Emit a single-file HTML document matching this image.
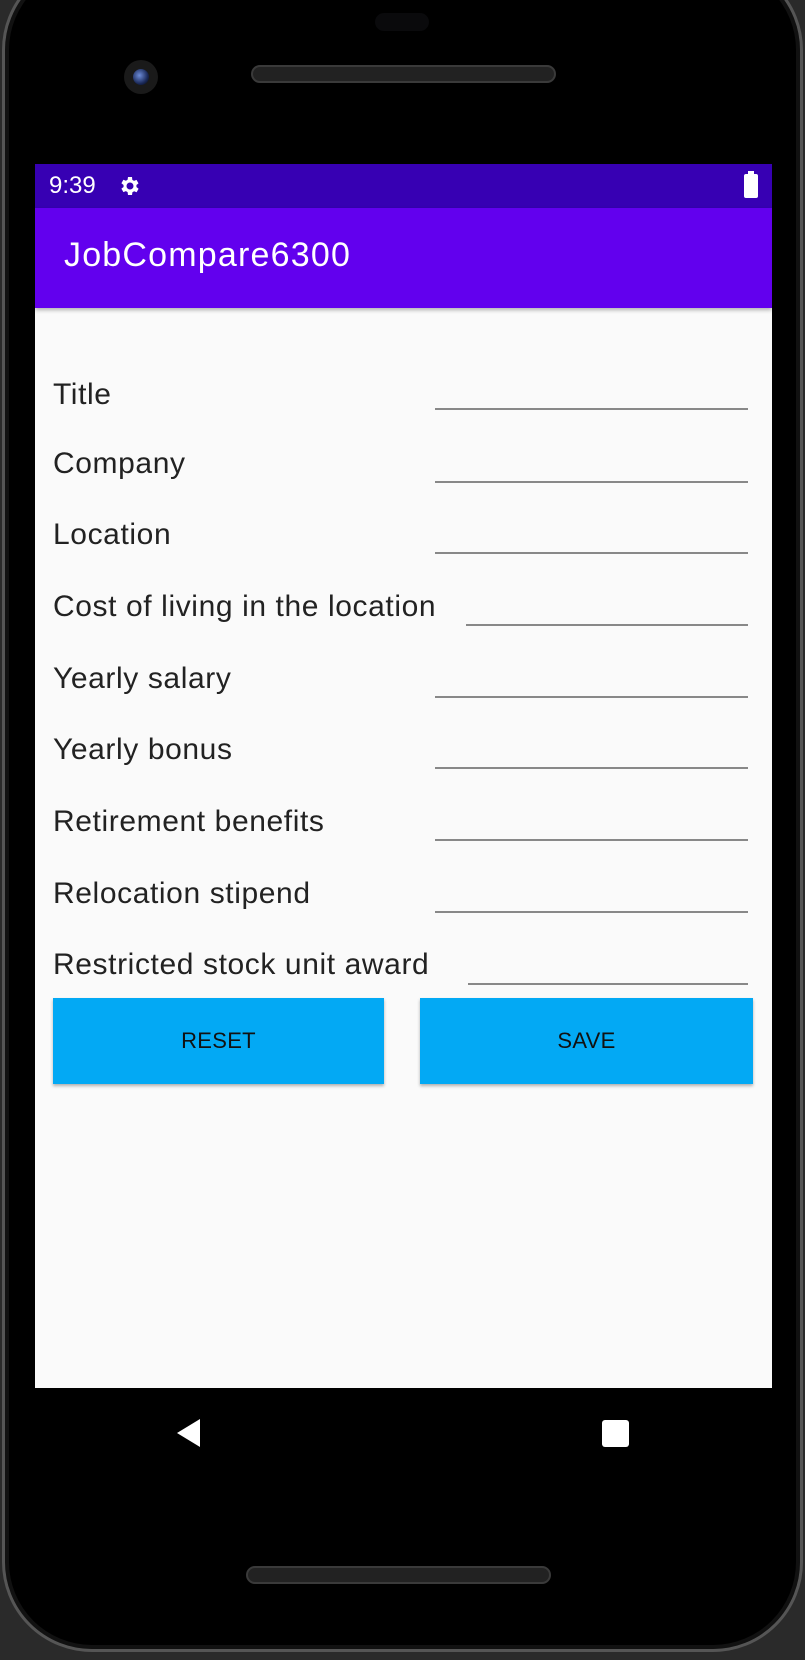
<!DOCTYPE html>
<html><head><meta charset="utf-8"><style>
*{margin:0;padding:0;box-sizing:border-box}
body{width:805px;height:1660px;background:#2a2a2a;position:relative;overflow:hidden;font-family:"Liberation Sans",sans-serif}
.phone{position:absolute;left:2px;top:-40px;width:801px;height:1692px;background:#000;border-radius:90px;border:3px solid #555;box-shadow:inset 0 0 0 4px #111}
.abs{position:absolute}
.screen{position:absolute;left:35px;top:164px;width:737px;height:1224px;background:#fafafa}
.status{position:absolute;left:0;top:0;width:737px;height:44px;background:#3700b3;color:#fff}
.appbar{position:absolute;left:0;top:44px;width:737px;height:100px;background:#6200ee;color:#fff;box-shadow:0 2px 4px rgba(0,0,0,.3)}
.lbl{position:absolute;left:18px;font-size:30px;letter-spacing:0.6px;color:#222}
.line{position:absolute;height:2px;background:#888}
.btn{position:absolute;top:834px;height:86px;background:#03a9f4;color:#111;font-size:22px;letter-spacing:0.3px;display:flex;align-items:center;justify-content:center;box-shadow:0 2px 3px rgba(0,0,0,.3)}
</style></head><body>
<div class="phone"></div>
<div class="abs" style="left:375px;top:13px;width:54px;height:18px;background:#0a0a0c;border-radius:9px"></div>
<div class="abs" style="left:124px;top:60px;width:34px;height:34px;border-radius:50%;background:#1a1a1a;"><div style="margin:9px;width:16px;height:16px;border-radius:50%;background:radial-gradient(circle at 40% 40%,#6d8cd8,#1b2a5a 60%,#000)"></div></div>
<div class="abs" style="left:251px;top:65px;width:305px;height:18px;border-radius:9px;background:#222;border:2px solid #3a3a3a"></div>
<div class="abs" style="left:246px;top:1566px;width:305px;height:18px;border-radius:9px;background:#222;border:2px solid #3a3a3a"></div>
<div class="screen">
 <div class="status">
  <div class="abs" style="left:14px;top:8px;font-size:24px">9:39</div>
  <svg class="abs" style="left:83px;top:10px" width="24" height="24" viewBox="0 0 24 24"><path fill="#fff" d="M19.4 13a7.5 7.5 0 0 0 0-2l2.1-1.6-2-3.5-2.5 1a7 7 0 0 0-1.7-1L15 3h-4l-.4 2.7a7 7 0 0 0-1.7 1l-2.5-1-2 3.5L6.6 11a7.5 7.5 0 0 0 0 2l-2.2 1.6 2 3.5 2.5-1a7 7 0 0 0 1.7 1L11 21h4l.4-2.7a7 7 0 0 0 1.7-1l2.5 1 2-3.5zM13 15.5a3.5 3.5 0 1 1 0-7 3.5 3.5 0 0 1 0 7z" transform="translate(-1 0)"/></svg>
  <div class="abs" style="left:709px;top:10px;width:14px;height:24px;background:#fff;border-radius:2px"></div>
  <div class="abs" style="left:713px;top:7px;width:6px;height:4px;background:#fff"></div>
 </div>
 <div class="appbar"><div class="abs" style="left:29px;top:28px;font-size:34px;letter-spacing:1.2px">JobCompare6300</div></div>
 <div class="lbl" style="top:214px">Title</div>
 <div class="lbl" style="top:283px">Company</div>
 <div class="lbl" style="top:354px">Location</div>
 <div class="lbl" style="top:426px">Cost of living in the location</div>
 <div class="lbl" style="top:498px">Yearly salary</div>
 <div class="lbl" style="top:569px">Yearly bonus</div>
 <div class="lbl" style="top:641px">Retirement benefits</div>
 <div class="lbl" style="top:713px">Relocation stipend</div>
 <div class="lbl" style="top:784px">Restricted stock unit award</div>
 <div class="line" style="left:400px;width:313px;top:244px"></div>
 <div class="line" style="left:400px;width:313px;top:317px"></div>
 <div class="line" style="left:400px;width:313px;top:388px"></div>
 <div class="line" style="left:431px;width:282px;top:460px"></div>
 <div class="line" style="left:400px;width:313px;top:532px"></div>
 <div class="line" style="left:400px;width:313px;top:603px"></div>
 <div class="line" style="left:400px;width:313px;top:675px"></div>
 <div class="line" style="left:400px;width:313px;top:747px"></div>
 <div class="line" style="left:433px;width:280px;top:819px"></div>
 <div class="btn" style="left:18px;width:331px">RESET</div>
 <div class="btn" style="left:385px;width:333px">SAVE</div>
</div>
<svg class="abs" style="left:175px;top:1418px" width="28" height="30" viewBox="0 0 28 30"><path fill="#fff" d="M25 1 L2 15 L25 29 Z"/></svg>
<div class="abs" style="left:602px;top:1420px;width:27px;height:27px;background:#fff;border-radius:3px"></div>
</body></html>
